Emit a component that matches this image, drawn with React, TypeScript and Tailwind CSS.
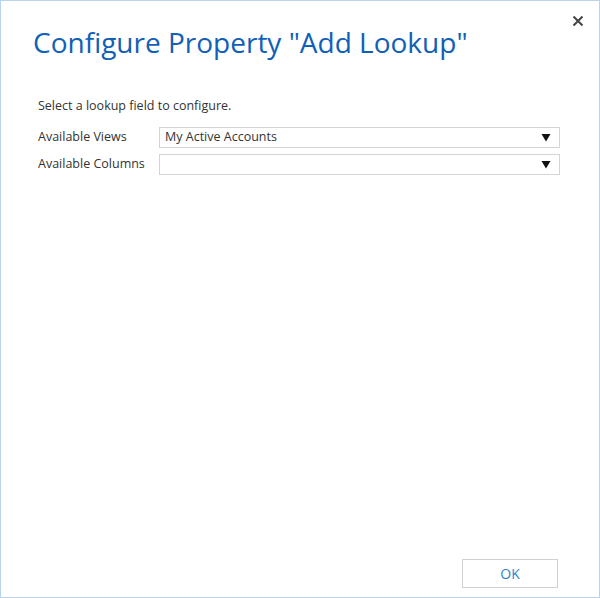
import React from "react";

function SelectBox({ value }: { value: string }) {
  return (
    <div className="flex items-center justify-between w-[401px] h-[21px] border border-[#d4d4d4] bg-white pl-[5px] pr-[8px]">
      <span className="text-[12.5px] text-[#333]">{value}</span>
      <svg width="10" height="9" viewBox="0 0 10 9">
        <polygon points="0.5,1 9.5,1 5,8.5" fill="#111" />
      </svg>
    </div>
  );
}

export default function App() {
  return (
    <div
      className="w-[600px] h-[598px] bg-white border border-[#b8d3ef] flex flex-col relative"
      style={{ fontFamily: '"Open Sans", "Noto Sans", sans-serif' }}
    >
      <button className="absolute right-[15px] top-[14px] text-[#444]">
        <svg width="12" height="12" viewBox="0 0 12 12">
          <path d="M1.5 1.5 L10.5 10.5 M10.5 1.5 L1.5 10.5" stroke="#444" strokeWidth="2" />
        </svg>
      </button>
      <h1 className="ml-[32px] mt-[21px] text-[28px] leading-[40px] text-[#1160b7]">
        Configure Property "Add Lookup"
      </h1>
      <p className="ml-[37px] mt-[35px] text-[12.5px] leading-[18px] text-[#333]">
        Select a lookup field to configure.
      </p>
      <div className="ml-[37px] mt-[12px] flex flex-col gap-[6px]">
        <div className="flex items-center">
          <span className="w-[121px] text-[12.5px] text-[#333]">Available Views</span>
          <SelectBox value="My Active Accounts" />
        </div>
        <div className="flex items-center">
          <span className="w-[121px] text-[12.5px] text-[#333]">Available Columns</span>
          <SelectBox value="" />
        </div>
      </div>
      <div className="flex-1" />
      <div className="flex justify-end pr-[41px] pb-[9px]">
        <button className="w-[96px] h-[29px] border border-[#d0d0d0] bg-white text-[14px] text-[#2f7fd0]">
          OK
        </button>
      </div>
    </div>
  );
}
